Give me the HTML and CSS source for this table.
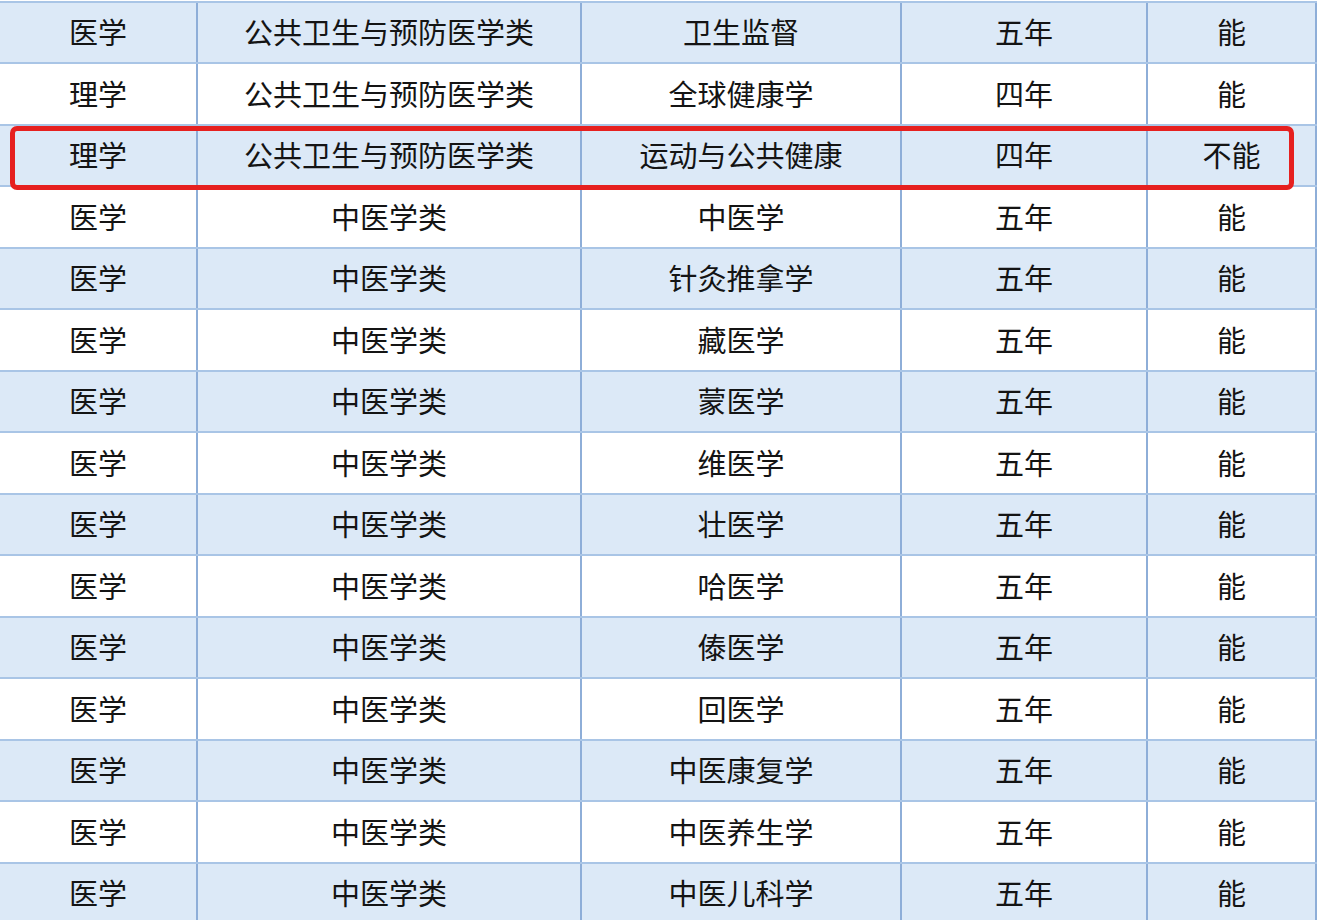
FILE: index.html
```html
<!DOCTYPE html>
<html lang="zh">
<head>
<meta charset="utf-8">
<link rel="stylesheet" href="styles.css">
</head>
<body>
<div class="table">
  <div class="row blue"><div class="c c1">医学</div><div class="c c2">公共卫生与预防医学类</div><div class="c c3">卫生监督</div><div class="c c4">五年</div><div class="c c5">能</div></div>
  <div class="row"><div class="c c1">理学</div><div class="c c2">公共卫生与预防医学类</div><div class="c c3">全球健康学</div><div class="c c4">四年</div><div class="c c5">能</div></div>
  <div class="row blue"><div class="c c1">理学</div><div class="c c2">公共卫生与预防医学类</div><div class="c c3">运动与公共健康</div><div class="c c4">四年</div><div class="c c5">不能</div></div>
  <div class="row"><div class="c c1">医学</div><div class="c c2">中医学类</div><div class="c c3">中医学</div><div class="c c4">五年</div><div class="c c5">能</div></div>
  <div class="row blue"><div class="c c1">医学</div><div class="c c2">中医学类</div><div class="c c3">针灸推拿学</div><div class="c c4">五年</div><div class="c c5">能</div></div>
  <div class="row"><div class="c c1">医学</div><div class="c c2">中医学类</div><div class="c c3">藏医学</div><div class="c c4">五年</div><div class="c c5">能</div></div>
  <div class="row blue"><div class="c c1">医学</div><div class="c c2">中医学类</div><div class="c c3">蒙医学</div><div class="c c4">五年</div><div class="c c5">能</div></div>
  <div class="row"><div class="c c1">医学</div><div class="c c2">中医学类</div><div class="c c3">维医学</div><div class="c c4">五年</div><div class="c c5">能</div></div>
  <div class="row blue"><div class="c c1">医学</div><div class="c c2">中医学类</div><div class="c c3">壮医学</div><div class="c c4">五年</div><div class="c c5">能</div></div>
  <div class="row"><div class="c c1">医学</div><div class="c c2">中医学类</div><div class="c c3">哈医学</div><div class="c c4">五年</div><div class="c c5">能</div></div>
  <div class="row blue"><div class="c c1">医学</div><div class="c c2">中医学类</div><div class="c c3">傣医学</div><div class="c c4">五年</div><div class="c c5">能</div></div>
  <div class="row"><div class="c c1">医学</div><div class="c c2">中医学类</div><div class="c c3">回医学</div><div class="c c4">五年</div><div class="c c5">能</div></div>
  <div class="row blue"><div class="c c1">医学</div><div class="c c2">中医学类</div><div class="c c3">中医康复学</div><div class="c c4">五年</div><div class="c c5">能</div></div>
  <div class="row"><div class="c c1">医学</div><div class="c c2">中医学类</div><div class="c c3">中医养生学</div><div class="c c4">五年</div><div class="c c5">能</div></div>
  <div class="row blue"><div class="c c1">医学</div><div class="c c2">中医学类</div><div class="c c3">中医儿科学</div><div class="c c4">五年</div><div class="c c5">能</div></div>
  <div class="highlight"></div>
</div>
</body>
</html>
```
FILE: styles.css
```css
html, body {
  margin: 0;
  padding: 0;
  background: #ffffff;
  overflow: hidden;
}
body {
  width: 1318px;
  height: 920px;
  font-family: "Noto Sans CJK SC", "Noto Sans", sans-serif;
  color: #141414;
}
.table {
  position: relative;
  padding-top: 0.5px;
  width: 1317px;
}
.row {
  display: flex;
  height: 61.5px;
  box-sizing: border-box;
  border-top: 2px solid #a9c5e6;
  background: #ffffff;
}
.row.blue {
  background: #dce9f7;
}
.c {
  box-sizing: border-box;
  border-right: 2px solid #8eaed8;
  display: flex;
  align-items: center;
  justify-content: center;
  font-size: 29px;
  line-height: 1;
  padding-bottom: 1px;
}
.c1 { width: 198px; }
.c2 { width: 384px; }
.c3 { width: 320px; }
.c4 { width: 246px; }
.c5 { width: 169px; }
.highlight {
  position: absolute;
  left: 10px;
  top: 126px;
  width: 1284px;
  height: 64px;
  box-sizing: border-box;
  border: 5px solid #e6201f;
  border-radius: 7px;
}
```
